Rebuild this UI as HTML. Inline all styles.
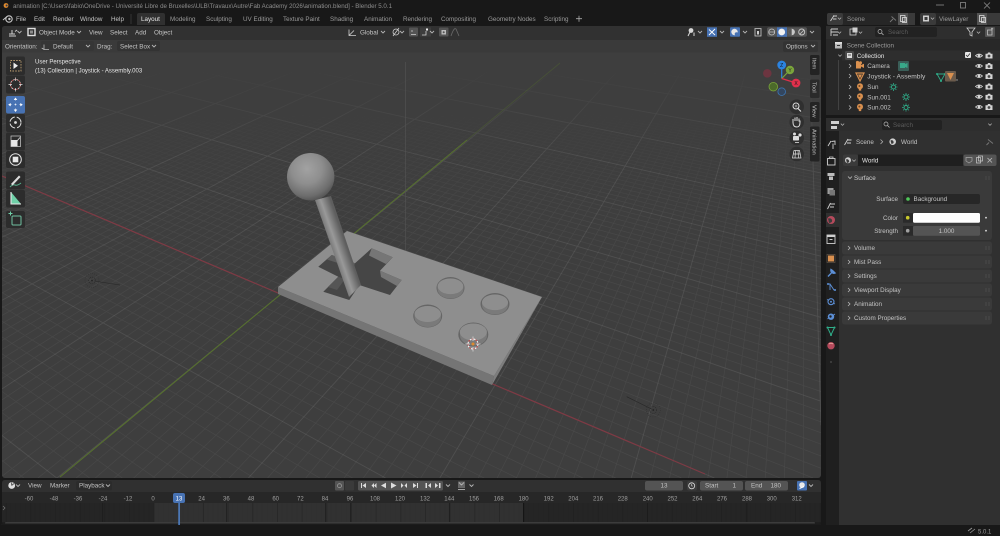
<!DOCTYPE html>
<html><head><meta charset="utf-8"><title>Blender</title>
<style>
html,body{margin:0;padding:0;background:#181818;width:1000px;height:536px;overflow:hidden}
#wrap{position:relative;width:1000px;height:536px;overflow:hidden}
svg{display:block;position:absolute;left:0;top:0;filter:blur(.25px)}
text{font-family:"Liberation Sans",sans-serif;font-size:6.3px;fill:#c4c4c4}
.d{fill:#9a9a9a}.b{fill:#e6e6e6}.r{text-anchor:end}.m{text-anchor:middle}
.ic{fill:none;stroke:#cfcfcf;stroke-width:.8}
.ch{fill:none;stroke:#b5b5b5;stroke-width:.8}
.tick{fill:#a0a0a0;text-anchor:middle;font-size:6px}
</style></head><body><div id="wrap">
<svg width="1000" height="536" viewBox="0 0 1000 536" xmlns="http://www.w3.org/2000/svg">
<defs>
<symbol id="cv" viewBox="0 0 6 6" overflow="visible"><path d="M1 2 L3 4 L5 2" fill="none" stroke="#b5b5b5" stroke-width=".9"/></symbol>
<symbol id="eye" viewBox="0 0 8 8" overflow="visible"><path d="M.5 4 Q4 .8 7.5 4 Q4 7.2 .5 4Z" fill="none" stroke="#d8d8d8" stroke-width=".8"/><circle cx="4" cy="4" r="1.3" fill="#d8d8d8"/></symbol>
<symbol id="cam" viewBox="0 0 8 8" overflow="visible"><path d="M.5 2.2H2.5L3 1H5.2L5.7 2.2H7.5V7H.5Z" fill="#d4d4d4"/><circle cx="4" cy="4.5" r="1.4" fill="#444"/></symbol>
<symbol id="bulb" viewBox="0 0 8 8" overflow="visible"><circle cx="4" cy="3.2" r="3" fill="#d9904f"/><rect x="2.8" y="5.8" width="2.4" height="1.8" fill="#d9904f"/><circle cx="3.4" cy="3" r="1" fill="#6b4526"/></symbol>
<symbol id="sunc" viewBox="0 0 8 8" overflow="visible"><circle cx="4" cy="4" r="2" fill="none" stroke="#2fae8a" stroke-width=".9"/><path d="M4 0V1.4M4 6.6V8M0 4H1.4M6.6 4H8M1.2 1.2L2.1 2.1M5.9 5.9L6.8 6.8M1.2 6.8L2.1 5.9M5.9 2.1L6.8 1.2" stroke="#2fae8a" stroke-width=".8"/></symbol>
<radialGradient id="ball" cx="42%" cy="33%" r="72%"><stop offset="0" stop-color="#a2a2a2"/><stop offset=".45" stop-color="#8e8e8e"/><stop offset=".8" stop-color="#6d6d6d"/><stop offset="1" stop-color="#4d4d4d"/></radialGradient>
<linearGradient id="stick" gradientUnits="userSpaceOnUse" x1="330.5" y1="248.6" x2="345.5" y2="243.4"><stop offset="0" stop-color="#727272"/><stop offset=".42" stop-color="#999"/><stop offset="1" stop-color="#5e5e5e"/></linearGradient>
<linearGradient id="mMinor" x1="0" y1="0" x2="0" y2="1"><stop offset=".0" stop-color="#000"/><stop offset=".19" stop-color="#000"/><stop offset=".40" stop-color="#fff"/><stop offset="1" stop-color="#fff"/></linearGradient>
<linearGradient id="mMajor" x1="0" y1="0" x2="0" y2="1"><stop offset=".0" stop-color="#000"/><stop offset=".12" stop-color="#000"/><stop offset=".30" stop-color="#fff"/><stop offset="1" stop-color="#fff"/></linearGradient>
<mask id="mkMinor" maskUnits="userSpaceOnUse" x="0" y="0" width="1000" height="536"><rect width="1000" height="536" fill="url(#mMinor)"/></mask>
<mask id="mkMajor" maskUnits="userSpaceOnUse" x="0" y="0" width="1000" height="536"><rect width="1000" height="536" fill="url(#mMajor)"/></mask>
<clipPath id="vp"><rect x="2" y="26" width="819" height="452" rx="3"/></clipPath>
<clipPath id="tl"><rect x="2" y="503" width="819" height="22"/></clipPath>
<pattern id="tkp" patternUnits="userSpaceOnUse" x="5.6" y="0" width="24.67" height="30"><rect width="24.67" height="30" fill="none"/><line x1=".5" y1="0" x2=".5" y2="30" stroke="#1a1a1a" stroke-opacity=".55" stroke-width=".7"/><line x1="5" y1="0" x2="5" y2="30" stroke="#000" stroke-opacity=".05" stroke-width=".6"/><line x1="10" y1="0" x2="10" y2="30" stroke="#000" stroke-opacity=".05" stroke-width=".6"/><line x1="15" y1="0" x2="15" y2="30" stroke="#000" stroke-opacity=".05" stroke-width=".6"/><line x1="20" y1="0" x2="20" y2="30" stroke="#000" stroke-opacity=".05" stroke-width=".6"/></pattern>
</defs>

<rect width="1000" height="536" fill="#181818"/>

<!-- Title bar -->
<circle cx="6" cy="5.5" r="2.4" fill="#e08a2c"/><circle cx="6.6" cy="5.5" r="1" fill="#26395a"/>
<text x="13" y="8" class="d" style="font-size:6.1px" fill-opacity=".9" textLength="379" lengthAdjust="spacingAndGlyphs">animation [C:\Users\fabio\OneDrive - Université Libre de Bruxelles\ULB\Travaux\Autre\Fab Academy 2026\animation.blend] - Blender 5.0.1</text>
<path d="M936 5H944" stroke="#8a8a8a" stroke-width=".8"/><rect x="960.5" y="2.5" width="5" height="5.5" fill="none" stroke="#8a8a8a" stroke-width=".8"/><path d="M984 2.5L990 8.5M990 2.5L984 8.5" stroke="#8a8a8a" stroke-width=".8"/>

<!-- Top bar -->
<circle cx="9" cy="19" r="3.2" fill="none" stroke="#c8c8c8" stroke-width="1.1"/><circle cx="9.4" cy="19" r="1.2" fill="#c8c8c8"/><path d="M3 20L7 16.5" stroke="#c8c8c8" stroke-width="1"/>
<text x="16" y="21">File</text><text x="34" y="21">Edit</text><text x="53" y="21">Render</text><text x="80" y="21">Window</text><text x="111" y="21">Help</text>
<line x1="131" y1="14" x2="131" y2="24" stroke="#333"/>
<path d="M137 25V15Q137 13 139 13H163Q165 13 165 15V25Z" fill="#303030"/>
<text x="141" y="21" class="b">Layout</text>
<g class="x"><text x="170" y="21" class="d">Modeling</text><text x="206" y="21" class="d">Sculpting</text><text x="243" y="21" class="d">UV Editing</text><text x="283" y="21" class="d">Texture Paint</text><text x="330" y="21" class="d">Shading</text><text x="364" y="21" class="d">Animation</text><text x="403" y="21" class="d">Rendering</text><text x="441" y="21" class="d">Compositing</text><text x="488" y="21" class="d">Geometry Nodes</text><text x="544" y="21" class="d">Scripting</text></g>
<path d="M576 18.7H582M579 15.7V21.7" stroke="#aaa" stroke-width=".8"/>

<!-- Viewport -->
<rect x="2" y="26" width="819" height="452" rx="3" fill="#3e3e3e"/>
<g clip-path="url(#vp)">
<g id="gMinor" mask="url(#mkMinor)" stroke="#fff" stroke-opacity=".055" stroke-width=".7" fill="none"></g>
<g id="gMajor" mask="url(#mkMajor)" stroke="#fff" stroke-opacity=".09" stroke-width=".9" fill="none"></g>
<!-- axes -->
<line x1="2" y1="176" x2="705" y2="474" stroke="#7e3a44" stroke-width="1.2"/>
<line x1="60" y1="477" x2="467" y2="140" stroke="#56702e" stroke-width="1.1"/>
<line x1="467" y1="140" x2="560" y2="63" stroke="#56702e" stroke-width="1" stroke-opacity=".35"/>
<line x1="405.5" y1="62" x2="405.5" y2="296" stroke="#555" stroke-width=".6"/>
<!-- sun lamps -->
<g fill="none" stroke="#262626" stroke-width=".6">
<circle cx="92" cy="280.5" r="3.4" stroke-dasharray="1 1"/><circle cx="92" cy="280.5" r="7" stroke-dasharray=".7 1.5" stroke-opacity=".75"/>
<circle cx="653.3" cy="410" r="3.4" stroke-dasharray="1 1"/><circle cx="653.3" cy="410" r="7" stroke-dasharray=".7 1.5" stroke-opacity=".75"/></g>
<circle cx="92" cy="280.5" r=".9" fill="#222"/><circle cx="653.3" cy="410" r=".9" fill="#222"/>
<line x1="94" y1="281" x2="120" y2="285" stroke="#262626" stroke-width=".6"/>
<line x1="651.5" y1="409" x2="626.7" y2="396.7" stroke="#262626" stroke-width=".6"/>

<!-- Model: base -->
<polygon points="278,287 494,376 492,385 278,294" fill="#757575"/>
<polygon points="494,376 542,297 492,385" fill="#7d7d7d"/>
<polygon points="347,231 542,297 494,376 278,287" fill="#8e8e8e"/>
<!-- cross cut -->
<polygon points="371.7,248.3 392.7,257.3 380,270.7 401.7,280 390,295 359.3,285 349.3,300 323.3,291.7 338.3,276.7 318.3,266.7 331.7,255 355,263.3" fill="#464646"/>
<polygon points="371.7,248.3 392.7,257.3 386,264 369,255.5" fill="#767676"/>
<polygon points="380,270.7 401.7,280 397,286 381,277" fill="#767676"/>
<polygon points="331.7,255 355,263.3 353,268 327,259.5" fill="#5f5f5f"/>
<polygon points="338.3,276.7 345,279 337,290 328,287" fill="#555"/>
<!-- stick -->
<polygon points="315,200 331,196 361,285 349,297" fill="url(#stick)"/>
<!-- sphere -->
<circle cx="310.7" cy="176.7" r="23.7" fill="url(#ball)"/>
<!-- buttons -->
<g stroke-width=".5">
<ellipse cx="450.5" cy="288" rx="14" ry="11" fill="#666"/><path d="M437.5 286.5 A12.8 8 0 0 1 463.5 286.5 V289 A13 9.5 0 0 1 437.5 289Z" fill="#7a7a7a"/><ellipse cx="450.5" cy="286.3" rx="12.8" ry="7.8" fill="#8e8e8e"/>
<ellipse cx="495" cy="304" rx="14.5" ry="11" fill="#666"/><path d="M482 302.5 A13 8 0 0 1 508 302.5 V305 A13 9.5 0 0 1 482 305Z" fill="#7a7a7a"/><ellipse cx="495" cy="302.3" rx="13" ry="7.8" fill="#8e8e8e"/>
<ellipse cx="427.7" cy="316" rx="14.5" ry="11.5" fill="#666"/><path d="M414.5 314 A13.2 8 0 0 1 441 314 V317 A13.2 10 0 0 1 414.5 317Z" fill="#7a7a7a"/><ellipse cx="427.7" cy="314" rx="13.2" ry="8" fill="#8e8e8e"/>
<ellipse cx="473.3" cy="334.5" rx="15" ry="12" fill="#666"/><path d="M460 332 A13.5 8.5 0 0 1 487 332 V335.5 A13.5 10 0 0 1 460 335.5Z" fill="#7a7a7a"/><ellipse cx="473.3" cy="332" rx="13.5" ry="8.5" fill="#8e8e8e"/>
</g>
<!-- 3D cursor -->
<circle cx="473" cy="344" r="5" fill="none" stroke="#fff" stroke-width="1" stroke-dasharray="2 2"/>
<circle cx="473" cy="344" r="5" fill="none" stroke="#c84848" stroke-width="1" stroke-dasharray="2 2" stroke-dashoffset="2"/>
<path d="M473 336.5V341M473 347V351.5M465.5 344H470M476 344H480.5" stroke="#ddd" stroke-width=".7"/>
<circle cx="473" cy="344" r="1.5" fill="#e08a2c"/>
</g>

<!-- Viewport header -->
<path d="M2 40V29Q2 26 5 26H818Q821 26 821 29V40Z" fill="#313131"/>
<rect x="2" y="40" width="819" height="12.5" fill="#3a3a3a"/>
<!-- editor icon -->
<path d="M9 34H15M12 30V33.5M15 31.5L17 30M9 36H16" stroke="#cfcfcf" stroke-width="1"/><use href="#cv" x="16.5" y="29" width="6" height="6"/>
<rect x="28" y="28.5" width="7" height="7" fill="none" stroke="#ddd" stroke-width="1.4"/><rect x="30" y="30.5" width="3" height="3" fill="#8c8c8c"/>
<text x="39" y="34.4">Object Mode</text><use href="#cv" x="76" y="29" width="6" height="6"/>
<text x="89" y="34.4">View</text><text x="110" y="34.4">Select</text><text x="135" y="34.4">Add</text><text x="154" y="34.4">Object</text>
<path d="M349 29.5V35.5H356M349 35.5L354 30.5" class="ic"/><text x="360" y="34.4">Global</text><use href="#cv" x="380" y="29" width="6" height="6"/>
<circle cx="396" cy="32" r="3" class="ic"/><path d="M393 36L399 28" class="ic"/><use href="#cv" x="399" y="29" width="6" height="6"/>
<rect x="409" y="27.5" width="9" height="9" rx="1" fill="#545454"/><path d="M411 34.5H416M411 31H413" class="ic"/>
<rect x="420" y="27.5" width="11" height="9" fill="#3d3d3d"/><path d="M422 35H426V31" class="ic"/><rect x="426" y="28.5" width="2" height="2" fill="#eee"/><use href="#cv" x="429" y="29" width="6" height="6"/>
<rect x="439" y="27.5" width="9.5" height="9" rx="1" fill="#545454"/><rect x="441.5" y="30" width="4.5" height="4.5" fill="#bbb"/><circle cx="443.7" cy="32.2" r="1" fill="#545454"/>
<path d="M451 36Q454 27 456 29L459 36" fill="none" stroke="#6a6a6a" stroke-width=".8"/>
<!-- right group -->
<circle cx="691" cy="30.5" r="2.4" fill="#d8d8d8"/><path d="M688 36L690 32M694 32.5V36" stroke="#d8d8d8" stroke-width="1"/><use href="#cv" x="697" y="29" width="6" height="6"/>
<rect x="707" y="27.3" width="10" height="9.5" fill="#4772b3"/><path d="M709 35L715 29M709 29.5L715 35M712 32L715 29" stroke="#fff" stroke-width=".9"/><use href="#cv" x="719" y="29" width="6" height="6"/>
<rect x="730" y="27.3" width="10" height="9.5" rx="1" fill="#4772b3"/><circle cx="734.5" cy="32" r="3.2" fill="#e6e6e6"/><circle cx="736.5" cy="34" r="1.8" fill="#4772b3"/><use href="#cv" x="742" y="29" width="6" height="6"/>
<path d="M754.5 28.5H761.5M755 29V36H761V29" class="ic"/><rect x="757" y="31" width="2" height="3.5" fill="#ccc"/>
<rect x="767" y="27.3" width="40" height="9.5" rx="2" fill="#545454"/><rect x="777" y="27.3" width="10" height="9.5" fill="#4772b3"/>
<circle cx="771.7" cy="32" r="3" fill="none" stroke="#c8c8c8" stroke-width=".8"/><path d="M768.7 32H774.7" stroke="#c8c8c8" stroke-width=".7"/>
<circle cx="781.7" cy="32" r="3.4" fill="#f2f2f2"/><circle cx="791.7" cy="32" r="3.2" fill="#c8c8c8"/><path d="M791.7 28.8A3.2 3.2 0 0 0 791.7 35.2Z" fill="#555"/>
<circle cx="801.7" cy="32" r="3" fill="none" stroke="#c8c8c8" stroke-width=".9"/><path d="M800 34L804 30" stroke="#c8c8c8" stroke-width=".8"/>
<use href="#cv" x="809" y="29" width="6" height="6"/>

<!-- tool settings -->
<text x="5" y="48.4">Orientation:</text>
<rect x="41" y="41" width="53" height="10" rx="2" fill="#363636"/>
<path d="M44 44.5V49.5M44 49.5H49M44 49.5L41.7 48" stroke="#bbb" stroke-width=".8" fill="none"/>
<text x="53" y="48.4">Default</text><use href="#cv" x="85" y="43" width="6" height="6"/>
<text x="97" y="48.4">Drag:</text>
<rect x="117" y="41" width="43" height="10" rx="2" fill="#333"/><text x="120" y="48.4">Select Box</text><use href="#cv" x="151" y="43" width="6" height="6"/>
<rect x="783" y="41.5" width="35" height="10.5" rx="2" fill="#333"/><text x="786" y="48.6">Options</text><use href="#cv" x="810" y="43" width="6" height="6"/>

<text x="35" y="63.6" class="b" style="font-size:6px">User Perspective</text>
<text x="35" y="72.6" class="b" style="font-size:6px">(13) Collection | Joystick - Assembly.003</text>

<!-- Left toolbar -->
<g>
<rect x="6" y="56.5" width="19" height="18.5" rx="2" fill="#2c2c2c"/>
<rect x="6" y="75.5" width="19" height="18" rx="2" fill="#2c2c2c"/>
<rect x="6" y="96" width="19" height="17.5" rx="2" fill="#4772b3"/>
<rect x="6" y="114" width="19" height="18" rx="2" fill="#2c2c2c"/>
<rect x="6" y="132.5" width="19" height="18" rx="2" fill="#2c2c2c"/>
<rect x="6" y="151" width="19" height="17" rx="2" fill="#2c2c2c"/>
<rect x="6" y="171.5" width="19" height="18" rx="2" fill="#2c2c2c"/>
<rect x="6" y="190" width="19" height="17.5" rx="2" fill="#2c2c2c"/>
<rect x="6" y="211" width="19" height="17" rx="2" fill="#2c2c2c"/>
<!-- select box -->
<rect x="10.5" y="60.5" width="10.5" height="10.5" fill="none" stroke="#b79a6e" stroke-width=".9" stroke-dasharray="1.6 1.2"/><path d="M13.5 62.5V69L18 65.7Z" fill="#eee"/>
<!-- cursor -->
<circle cx="15.5" cy="84.5" r="5" fill="none" stroke="#d8d8d8" stroke-width=".9" stroke-dasharray="2 1.5"/><circle cx="15.5" cy="84.5" r="5" fill="none" stroke="#b04b4b" stroke-width=".9" stroke-dasharray="2 1.5" stroke-dashoffset="2"/><path d="M15.5 77.5V81M15.5 88V91.5M8.5 84.5H12M19 84.5H22.5" stroke="#ddd" stroke-width=".7"/>
<!-- move -->
<path d="M15.5 98.5V111M9.5 104.7H21.5" stroke="#fff" stroke-width=".6" stroke-dasharray="2 3"/>
<path d="M15.5 97.5L13.7 100H17.3ZM15.5 112L13.7 109.5H17.3ZM8.2 104.7L10.7 103V106.4ZM22.8 104.7L20.3 103V106.4Z" fill="#fff"/>
<!-- rotate -->
<circle cx="15.5" cy="122.5" r="5.5" fill="none" stroke="#e0e0e0" stroke-width="1" stroke-dasharray="7 2"/><circle cx="15.5" cy="122.5" r="1.4" fill="#ddd"/>
<!-- scale -->
<rect x="11" y="140" width="6.5" height="6.5" fill="#e8e8e8"/><rect x="11" y="136" width="9.5" height="10.5" fill="none" stroke="#cfcfcf" stroke-width=".7"/><path d="M17 141L20 137.5" stroke="#ddd" stroke-width=".9"/>
<!-- transform -->
<circle cx="15.5" cy="159.5" r="5.8" fill="none" stroke="#e0e0e0" stroke-width="1"/><rect x="12.7" y="156.7" width="5.6" height="5.6" fill="#e8e8e8"/>
<!-- annotate -->
<path d="M10 187Q13 184 15 185T21 183" fill="none" stroke="#58b08e" stroke-width="1"/><path d="M11 184L19 175.5L20.5 177L12.5 185.5Z" fill="#ddd"/>
<!-- measure -->
<path d="M11 192V204H21Z" fill="#6fd0a8"/><path d="M11 192V204H21" fill="none" stroke="#e8e8e8" stroke-width="1.1"/>
<!-- add cube -->
<rect x="12" y="216" width="9" height="9" rx="1" fill="none" stroke="#6fbfa0" stroke-width="1"/><path d="M10.5 211.5V215.5M8.5 213.5H12.5" stroke="#6fd0a8" stroke-width="1"/>
</g>

<!-- Gizmo -->
<circle cx="767.3" cy="73.3" r="4.3" fill="#6c3540"/>
<circle cx="773.3" cy="86.7" r="4.3" fill="#4c6a2a" stroke="#7aa43b" stroke-width=".8"/>
<circle cx="781.7" cy="91.7" r="3.8" fill="#33465f" stroke="#3c78b8" stroke-width=".8"/>
<line x1="781.7" y1="78.5" x2="781.7" y2="66" stroke="#2b83e0" stroke-width="1.2"/>
<line x1="781.7" y1="78.5" x2="790" y2="70" stroke="#7aa43b" stroke-width="1.2"/>
<line x1="781.7" y1="78.5" x2="796" y2="83" stroke="#e0304c" stroke-width="1.2"/>
<circle cx="790" cy="70" r="4.2" fill="#7aa43b"/><text x="790" y="72" class="m" style="font-size:5px;fill:#222">Y</text>
<circle cx="781.7" cy="65" r="4.4" fill="#2b83e0"/><text x="781.7" y="67" class="m" style="font-size:5px;fill:#111">Z</text>
<circle cx="796" cy="83" r="4.4" fill="#e0304c"/><text x="796" y="85" class="m" style="font-size:5px;fill:#111">X</text>
<!-- Nav buttons -->
<circle cx="796.7" cy="106.7" r="7.3" fill="#2f2f2f"/><circle cx="796" cy="106" r="3" fill="none" stroke="#ddd" stroke-width="1"/><path d="M798 108.5L801 111.5" stroke="#ddd" stroke-width="1.2"/><path d="M794.6 106H797.4M796 104.6V107.4" stroke="#ddd" stroke-width=".6"/>
<circle cx="796.7" cy="122" r="7.3" fill="#2f2f2f"/><path d="M793 122.5V119M795 121V117.5M797 121V117M799 121.5V118.5M793 122.5C793 126 795 127 797 127S800 125.5 800 122V120.5" fill="none" stroke="#ddd" stroke-width="1"/>
<circle cx="796.7" cy="138" r="7.3" fill="#2f2f2f"/><rect x="793" y="136" width="6" height="4.5" rx=".8" fill="#ddd"/><circle cx="800" cy="135" r="1.6" fill="#ddd"/><circle cx="794.5" cy="134" r="1.5" fill="#ddd"/><path d="M795 142.5H799" stroke="#ddd" stroke-width=".8"/>
<circle cx="796.7" cy="154" r="7.3" fill="#2f2f2f"/><path d="M792.5 158L794 150.5H799.5L801 158ZM793 154H800.5M795.5 150.5L795 158M798 150.5L798.5 158" fill="none" stroke="#ddd" stroke-width=".7"/>

<!-- Sidebar tabs -->
<rect x="810" y="55" width="9.5" height="20" rx="1.5" fill="#232323"/>
<rect x="810" y="79.5" width="9.5" height="18.5" rx="1.5" fill="#2a2a2a"/>
<rect x="810" y="102" width="9.5" height="20" rx="1.5" fill="#232323"/>
<rect x="810" y="126.5" width="9.5" height="35" rx="1.5" fill="#232323"/>
<text transform="translate(812.5,58) rotate(90)" style="font-size:5.8px">Item</text>
<text transform="translate(812.5,82) rotate(90)" style="font-size:5.8px">Tool</text>
<text transform="translate(812.5,105) rotate(90)" style="font-size:5.8px">View</text>
<text transform="translate(812.5,129) rotate(90)" style="font-size:5.8px">Animation</text>

<!-- Timeline -->
<rect x="2" y="480" width="819" height="45" rx="3" fill="#1f1f1f"/>
<path d="M2 492V483Q2 480 5 480H818Q821 480 821 483V492Z" fill="#303030"/>
<rect x="2" y="492" width="819" height="11" fill="#272727"/>
<rect x="2" y="503" width="819" height="19" fill="#252525"/>
<rect x="154" y="503" width="369.5" height="19" fill="#313131"/>
<rect x="2" y="503" width="819" height="22" fill="url(#tkp)" clip-path="url(#tl)"/>
<line x1="102.7" y1="503" x2="102.7" y2="522" stroke="#1a1a1a" stroke-width=".7"/><line x1="226.7" y1="503" x2="226.7" y2="522" stroke="#1a1a1a" stroke-width=".7"/><line x1="325.7" y1="503" x2="325.7" y2="522" stroke="#1a1a1a" stroke-width=".7"/><line x1="350.7" y1="503" x2="350.7" y2="522" stroke="#1a1a1a" stroke-width=".7"/><line x1="449.3" y1="503" x2="449.3" y2="522" stroke="#1a1a1a" stroke-width=".7"/><line x1="523.5" y1="503" x2="523.5" y2="522" stroke="#111" stroke-width=".8"/><line x1="647.7" y1="503" x2="647.7" y2="522" stroke="#1a1a1a" stroke-width=".6"/><line x1="747" y1="503" x2="747" y2="522" stroke="#1a1a1a" stroke-width=".6"/>
<rect x="5" y="522" width="810" height="2" rx="1" fill="#3c3c3c"/>
<rect x="1" y="523.6" width="820" height="1.4" fill="#1c1c1c"/>
<path d="M3 506L5 508L3 510" fill="none" stroke="#777" stroke-width=".7"/>
<circle cx="11.7" cy="485.5" r="3.4" fill="#ddd"/><path d="M11.7 485.5L14 483.5M11.7 485.5V482.5" stroke="#333" stroke-width=".8"/><use href="#cv" x="15" y="482.5" width="6" height="6"/>
<text x="28" y="487.7">View</text><text x="50" y="487.7">Marker</text>
<rect x="76" y="481" width="36" height="9.5" rx="2" fill="#2b2b2b"/><text x="79" y="487.7">Playback</text><use href="#cv" x="105" y="482.5" width="6" height="6"/>
<rect x="335" y="481" width="9" height="9.5" rx="1" fill="#545454"/><circle cx="339.5" cy="485.7" r="2" fill="none" stroke="#999" stroke-width=".8"/>
<rect x="345" y="481" width="9" height="9.5" rx="1" fill="#3a3a3a"/>
<rect x="358" y="481" width="85" height="9.5" rx="1.5" fill="#545454"/>
<g fill="#ddd"><path d="M361 483V488H362V483ZM366 483L362.5 485.5L366 488Z"/><path d="M371.5 485.5L374 483V488ZM374 485.5L376.5 483V488Z"/><path d="M386 482.8V488.2L381 485.5Z"/><path d="M391 482.5V488.5L396.5 485.5Z"/><path d="M401 483V488L403.5 485.5ZM407 483V488L404.5 485.5Z"/><path d="M413 483V488L416.5 485.5ZM417 483H418V488H417Z"/><path d="M425 483V488L428 485.5ZM429 483H430.5V488H429Z" transform="matrix(-1 0 0 1 856 0)"/><path d="M435 483V488L438 485.5ZM439 483H440.5V488H439Z"/></g>
<use href="#cv" x="445" y="482.5" width="6" height="6"/>
<rect x="458" y="481.5" width="7" height="6.5" fill="#666"/><path d="M459 482.5L461.5 485L464 482.5M458 489.5H465" stroke="#ccc" stroke-width=".7" fill="none"/><use href="#cv" x="468.5" y="482.5" width="6" height="6"/>
<rect x="645" y="481" width="38" height="9.5" rx="2" fill="#545454"/><text x="664" y="487.7" class="m">13</text>
<rect x="687" y="481" width="10" height="9.5" rx="2" fill="#3c3c3c"/><circle cx="691.7" cy="485.8" r="3" fill="none" stroke="#ddd" stroke-width=".8"/><path d="M691.7 484V486H693" fill="none" stroke="#ddd" stroke-width=".6"/>
<rect x="700" y="481" width="43" height="9.5" rx="2" fill="#545454"/><text x="705" y="487.7">Start</text><text x="736" y="487.7" class="r">1</text>
<rect x="745" y="481" width="43" height="9.5" rx="2" fill="#545454"/><text x="751" y="487.7">End</text><text x="781" y="487.7" class="r">180</text>
<rect x="797" y="481" width="10" height="9.5" rx="1" fill="#4772b3"/><circle cx="802" cy="485" r="2.8" fill="#eaeaea"/><path d="M799.5 488.5L804 486.5" stroke="#fff"/><use href="#cv" x="808" y="482.5" width="6" height="6"/>

<!-- Timeline ruler -->
<g class="t">
<text class="tick" x="29" y="500.6">-60</text><text class="tick" x="54" y="500.6">-48</text><text class="tick" x="78" y="500.6">-36</text><text class="tick" x="103" y="500.6">-24</text><text class="tick" x="128" y="500.6">-12</text><text class="tick" x="153" y="500.6">0</text>
<text class="tick" x="201.6" y="500.6">24</text><text class="tick" x="226.4" y="500.6">36</text><text class="tick" x="251" y="500.6">48</text><text class="tick" x="275.7" y="500.6">60</text><text class="tick" x="300.4" y="500.6">72</text><text class="tick" x="325" y="500.6">84</text><text class="tick" x="350" y="500.6">96</text><text class="tick" x="375" y="500.6">108</text><text class="tick" x="400" y="500.6">120</text><text class="tick" x="425" y="500.6">132</text><text class="tick" x="449.3" y="500.6">144</text><text class="tick" x="474" y="500.6">156</text><text class="tick" x="498.7" y="500.6">168</text><text class="tick" x="523.6" y="500.6">180</text><text class="tick" x="548.7" y="500.6">192</text><text class="tick" x="573.3" y="500.6">204</text><text class="tick" x="598" y="500.6">216</text><text class="tick" x="622.7" y="500.6">228</text><text class="tick" x="647.7" y="500.6">240</text><text class="tick" x="672.5" y="500.6">252</text><text class="tick" x="697.3" y="500.6">264</text><text class="tick" x="722" y="500.6">276</text><text class="tick" x="747" y="500.6">288</text><text class="tick" x="771.7" y="500.6">300</text><text class="tick" x="796.7" y="500.6">312</text>
</g>
<rect x="178.3" y="500" width="1.6" height="25" fill="#4f7fc2"/>
<rect x="173" y="493" width="12" height="10" rx="2" fill="#4772b3"/><text x="179" y="500.4" class="m b" style="font-size:6px;fill:#fff">13</text>

<!-- Right column: scene row -->
<rect x="827" y="13" width="88" height="12" rx="2" fill="#262626"/>
<rect x="827" y="13" width="16" height="12" rx="2" fill="#3a3a3a"/>
<path d="M830.5 21L834 15.5M833 16H837M833 19H836.5" stroke="#cfcfcf" stroke-width=".9" fill="none"/><use href="#cv" x="837" y="16" width="5" height="5"/>
<text x="847" y="21" class="d">Scene</text>
<path d="M890 22L893 19M891.5 16.5L896 20.5" stroke="#777" stroke-width=".9"/>
<rect x="898" y="13" width="10" height="12" fill="#545454"/><rect x="900.5" y="15.5" width="4.5" height="6" fill="none" stroke="#ddd" stroke-width=".8"/><rect x="902.5" y="17.5" width="4" height="5" fill="none" stroke="#ddd" stroke-width=".8"/>
<rect x="908" y="13" width="7" height="12" fill="#3a3a3a"/>
<rect x="920" y="13" width="80" height="12" rx="2" fill="#262626"/>
<rect x="920" y="13" width="16" height="12" rx="2" fill="#3a3a3a"/>
<rect x="923" y="15.5" width="6" height="6" fill="#cfcfcf"/><rect x="924.5" y="17" width="3" height="3" fill="#3a3a3a"/><use href="#cv" x="930" y="16" width="5" height="5"/>
<text x="939" y="21" class="d">ViewLayer</text>
<rect x="977" y="13" width="10" height="12" fill="#545454"/><rect x="979.5" y="15.5" width="4.5" height="6" fill="none" stroke="#ddd" stroke-width=".8"/><rect x="981.5" y="17.5" width="4" height="5" fill="none" stroke="#ddd" stroke-width=".8"/>
<rect x="987" y="13" width="13" height="12" fill="#3a3a3a"/>

<!-- Outliner -->
<rect x="826" y="26" width="174" height="13" fill="#2e2e2e"/>
<rect x="826" y="39" width="174" height="76" fill="#282828"/>
<path d="M831 29H838M831 32H838M833 35H838M831 29V36" stroke="#cfcfcf" stroke-width=".9" fill="none"/><use href="#cv" x="837" y="30" width="5" height="5"/>
<rect x="850" y="29" width="6" height="6" fill="none" stroke="#cfcfcf" stroke-width=".8"/><rect x="852.5" y="27.5" width="5" height="5" fill="#cfcfcf"/><use href="#cv" x="858" y="30" width="5" height="5"/>
<rect x="875" y="27" width="62" height="10" rx="2" fill="#222"/><circle cx="880" cy="31.5" r="2" fill="none" stroke="#bbb" stroke-width=".7"/><path d="M881.5 33L883.5 35" stroke="#bbb" stroke-width=".8"/><text x="888" y="34.2" style="fill:#5c5c5c">Search</text>
<path d="M967 28H975L972 32V36L970 35V32Z" fill="none" stroke="#cfcfcf" stroke-width=".8"/><use href="#cv" x="976" y="30" width="5" height="5"/>
<rect x="985" y="27" width="10" height="10" rx="1" fill="#545454"/><rect x="987.5" y="30" width="4.5" height="5" fill="none" stroke="#ccc" stroke-width=".7"/><path d="M992 27.7V30M991 28.8H993.2" stroke="#ccc" stroke-width=".7"/>

<rect x="835" y="42" width="7" height="6.5" fill="#b8b8b8"/><rect x="835" y="42" width="7" height="1.8" fill="#e0e0e0"/><rect x="837" y="45" width="3" height="1" fill="#333"/>
<text x="846.7" y="47.4" class="d">Scene Collection</text>
<rect x="842" y="50.5" width="158" height="10" fill="#2e2e2e"/>
<use href="#cv" x="837.5" y="53" width="5" height="5"/>
<rect x="845" y="51" width="9" height="9" rx="1.5" fill="#4a4a4a"/><rect x="847" y="53" width="5" height="5" fill="#ddd"/><rect x="848" y="54.5" width="3" height="1" fill="#555"/>
<text x="856.7" y="57.8" class="b">Collection</text>
<rect x="965" y="52" width="6" height="6" rx="1" fill="#e8e8e8"/><path d="M966 55L967.5 56.5L970 53.5" fill="none" stroke="#333" stroke-width=".8"/>
<line x1="838.5" y1="60" x2="838.5" y2="110" stroke="#555" stroke-width=".6"/>
<g class="ch"><path d="M849 64L851 66L849 68"/><path d="M849 74L851 76L849 78"/><path d="M849 85L851 87L849 89"/><path d="M849 95L851 97L849 99"/><path d="M849 105.5L851 107.5L849 109.5"/></g>
<rect x="856" y="63" width="5" height="5.5" fill="#d9904f"/><circle cx="857.5" cy="62.5" r="1.6" fill="#d9904f"/><circle cx="860.5" cy="62.7" r="1.5" fill="#d9904f"/><path d="M861 65L864 63.7V68L861 66.5Z" fill="#d9904f"/>
<text x="867.3" y="68">Camera</text>
<rect x="898" y="61" width="11" height="10" rx="1" fill="#3a5e58"/><rect x="900" y="63" width="5" height="5" fill="#38a889"/><path d="M905 64L907.5 63V68L905 67Z" fill="#38a889"/>
<path d="M856 73H864L860 81Z" fill="none" stroke="#d9904f" stroke-width="1.2"/><path d="M858 74.5H862L860 78.5Z" fill="#d9904f"/>
<text x="867.3" y="78.3" textLength="58" lengthAdjust="spacingAndGlyphs">Joystick - Assembly</text>
<path d="M937 74H945L941 81Z" fill="none" stroke="#2fae8a" stroke-width=".9"/><circle cx="937" cy="74" r="1" fill="#2fae8a"/><circle cx="945" cy="74" r="1" fill="#2fae8a"/><circle cx="941" cy="81" r="1" fill="#2fae8a"/>
<rect x="945" y="71" width="11" height="10.5" rx="1" fill="#6b5b4c"/><path d="M947 73H954L950.5 80Z" fill="#d9904f"/><circle cx="957" cy="80" r=".7" fill="#aaa"/>
<use href="#bulb" x="856" y="83" width="8" height="8"/><text x="867.3" y="89">Sun</text><use href="#sunc" x="889.5" y="83" width="8" height="8"/>
<use href="#bulb" x="856" y="93" width="8" height="8"/><text x="867.3" y="99.4">Sun.001</text><use href="#sunc" x="902" y="93" width="8" height="8"/>
<use href="#bulb" x="856" y="103.5" width="8" height="8"/><text x="867.3" y="109.7">Sun.002</text><use href="#sunc" x="902" y="103.5" width="8" height="8"/>
<use href="#eye" x="975" y="51.7" width="8" height="8"/><use href="#cam" x="985" y="51.5" width="8" height="8"/>
<use href="#eye" x="975" y="62" width="8" height="8"/><use href="#cam" x="985" y="62" width="8" height="8"/>
<use href="#eye" x="975" y="72" width="8" height="8"/><use href="#cam" x="985" y="72" width="8" height="8"/>
<use href="#eye" x="975" y="82.5" width="8" height="8"/><use href="#cam" x="985" y="82.5" width="8" height="8"/>
<use href="#eye" x="975" y="92.7" width="8" height="8"/><use href="#cam" x="985" y="92.7" width="8" height="8"/>
<use href="#eye" x="975" y="103" width="8" height="8"/><use href="#cam" x="985" y="103" width="8" height="8"/>

<!-- Properties -->
<rect x="826" y="118" width="174" height="13" fill="#2e2e2e"/>
<rect x="826" y="131" width="174" height="394" fill="#303030"/>
<rect x="826" y="131" width="13" height="394" fill="#1f1f1f"/>
<path d="M831 121H839V124H831ZM831 126H837V129H831Z" fill="#cfcfcf"/><use href="#cv" x="840" y="122" width="5" height="5"/>
<rect x="882" y="120" width="60" height="10" rx="2" fill="#222"/><circle cx="886" cy="124" r="2" fill="none" stroke="#bbb" stroke-width=".7"/><path d="M887.5 125.5L889.5 127.5" stroke="#bbb" stroke-width=".8"/><text x="893" y="127" style="fill:#5c5c5c">Search</text>
<use href="#cv" x="987.5" y="122" width="5" height="5"/>
<!-- Tab icons -->
<rect x="826" y="213" width="13" height="14" fill="#303030"/>
<path d="M828 146L831 141M833 143.5V149M831.5 141.5L835 141V145" stroke="#cfcfcf" stroke-width=".9" fill="none"/>
<rect x="827.5" y="158.5" width="7.5" height="6.5" fill="none" stroke="#cfcfcf" stroke-width=".9"/><path d="M829.5 158.5V157H833V158.5" stroke="#cfcfcf" stroke-width=".8" fill="none"/>
<path d="M827.5 173H834.5V176H827.5ZM829 176.5H833V180H829Z" fill="#bcbcbc"/>
<rect x="827.5" y="188" width="6" height="6" fill="#9c9c9c"/><rect x="829.5" y="190" width="5.5" height="5.5" fill="#777"/>
<path d="M827.5 209L830.5 203M830 204H835M830 207H834" stroke="#cfcfcf" stroke-width=".9" fill="none"/>
<circle cx="831" cy="220" r="4" fill="#b54a5c"/><path d="M828 218.5Q831 217.5 832 220T829 223" fill="#3c3c3c"/>
<rect x="827" y="235" width="8" height="8.5" fill="none" stroke="#cfcfcf" stroke-width=".9"/><rect x="827" y="235" width="8" height="2" fill="#cfcfcf"/><rect x="829.5" y="239" width="3" height="1" fill="#cfcfcf"/>
<rect x="828" y="255.5" width="6" height="6" fill="#d9904f"/><rect x="827" y="254.5" width="8" height="8" fill="none" stroke="#6b5b4c" stroke-width=".6"/>
<path d="M828 276.5L832 272.3M831 269.5A3 3 0 0 0 835 273L833.5 271.5L832.5 270.5Z" stroke="#5c8fd6" stroke-width="1.4" fill="#5c8fd6"/>
<path d="M828 284H830L834 290H836M830 284V290" stroke="#5c8fd6" stroke-width=".9" fill="none"/><circle cx="828" cy="284" r="1" fill="#5c8fd6"/><circle cx="835" cy="290" r="1" fill="#5c8fd6"/>
<circle cx="831" cy="301.7" r="3" fill="none" stroke="#5c8fd6" stroke-width="1.1"/><circle cx="831" cy="301.7" r="1" fill="#5c8fd6"/><path d="M827 299.5L829 300.5M835 304L833 303" stroke="#5c8fd6" stroke-width=".8"/>
<circle cx="831" cy="316.7" r="3.2" fill="#5c8fd6"/><circle cx="830.5" cy="316.5" r="1.2" fill="#1f1f1f"/><path d="M827.5 319L829 317.5M835 314L833 315.5" stroke="#5c8fd6" stroke-width=".8"/>
<path d="M827.5 327.5H834.5L831 335Z" fill="none" stroke="#2fae8a" stroke-width="1"/><circle cx="827.5" cy="327.5" r="1" fill="#2fae8a"/><circle cx="834.5" cy="327.5" r="1" fill="#2fae8a"/><circle cx="831" cy="335" r="1" fill="#2fae8a"/>
<circle cx="831" cy="345.7" r="3.7" fill="#b54a5c"/><path d="M829 344Q831 342.5 833 344" stroke="#eba" fill="none" stroke-width=".8"/>
<path d="M830 362L832 362" stroke="#555"/>

<!-- Breadcrumb -->
<path d="M844.5 145L848 139M847 140H851.5M847 143H851" stroke="#cfcfcf" stroke-width=".9" fill="none"/>
<text x="856" y="144">Scene</text><path d="M880.5 139.5L882.7 141.7L880.5 144" fill="none" stroke="#aaa" stroke-width=".8"/>
<circle cx="892.7" cy="141.7" r="3.3" fill="#cfcfcf"/><path d="M890.5 140.5Q892.7 139.5 893.5 141.5T891.5 144" fill="#3a3a3a"/>
<text x="901" y="144">World</text>
<path d="M986.5 145L989 142.5M988 139.5L993 143.5" stroke="#777" stroke-width=".9"/>
<!-- World selector -->
<rect x="843" y="154.5" width="15" height="11.5" rx="2" fill="#3a3a3a"/>
<circle cx="848" cy="160.3" r="3" fill="#cfcfcf"/><path d="M846 159.5Q848 158.5 849 160.5T847 163" fill="#3a3a3a"/><use href="#cv" x="851.5" y="158" width="5" height="5"/>
<rect x="858" y="154.5" width="105" height="11.5" fill="#1f1f1f"/><text x="862" y="162.7" class="b">World</text>
<rect x="963.5" y="154.5" width="33" height="11.5" rx="2" fill="#545454"/>
<path d="M966 157.5H972V161L969 163L966 161Z" fill="none" stroke="#a8a8a8" stroke-width=".7"/>
<rect x="976.5" y="157.5" width="4" height="5.5" fill="none" stroke="#ccc" stroke-width=".7"/><rect x="978.5" y="156" width="4" height="5" fill="none" stroke="#ccc" stroke-width=".7"/>
<path d="M987.5 158L992 162.5M992 158L987.5 162.5" stroke="#bbb" stroke-width=".8"/>

<!-- Surface panel -->
<rect x="842" y="171" width="150" height="69" rx="3" fill="#3a3a3a"/>
<path d="M848 176.5L850 178.5L852 176.5" fill="none" stroke="#bbb" stroke-width=".8"/>
<text x="854" y="180" class="b" style="fill:#cfcfcf">Surface</text>
<text x="898" y="201" class="r">Surface</text>
<rect x="903" y="194" width="77" height="10" rx="2" fill="#272727"/>
<circle cx="908" cy="199" r="1.8" fill="#50c95a"/><text x="913.5" y="201.2">Background</text>
<text x="898" y="220" class="r">Color</text>
<rect x="903" y="213" width="10" height="9.7" fill="#2a2a2a"/>
<circle cx="907.7" cy="217.7" r="1.8" fill="#c9c92c"/>
<rect x="913" y="213" width="67" height="9.7" rx="1.5" fill="#fff"/>
<circle cx="986" cy="217.7" r=".9" fill="#ddd"/>
<text x="898" y="233" class="r">Strength</text>
<rect x="903" y="226" width="10" height="9.7" fill="#2a2a2a"/>
<circle cx="907.7" cy="230.7" r="1.8" fill="#a1a1a1"/>
<rect x="913" y="226" width="67" height="9.7" rx="1.5" fill="#545454"/>
<text x="946.5" y="233" class="m">1.000</text>
<circle cx="986" cy="230.7" r=".9" fill="#ddd"/>
<g fill="#545454"><circle cx="986" cy="177" r=".6"/><circle cx="989" cy="177" r=".6"/><circle cx="986" cy="179" r=".6"/><circle cx="989" cy="179" r=".6"/></g>

<g fill="#3a3a3a">
<rect x="842" y="241.5" width="150" height="13" rx="2.5"/>
<rect x="842" y="255.5" width="150" height="13" rx="2.5"/>
<rect x="842" y="269.5" width="150" height="13" rx="2.5"/>
<rect x="842" y="283.5" width="150" height="13" rx="2.5"/>
<rect x="842" y="297.5" width="150" height="13" rx="2.5"/>
<rect x="842" y="311.5" width="150" height="13" rx="2.5"/>
</g>
<g class="ch"><path d="M848 246L850 248L848 250"/><path d="M848 260L850 262L848 264"/><path d="M848 274L850 276L848 278"/><path d="M848 288L850 290L848 292"/><path d="M848 302L850 304L848 306"/><path d="M848 316L850 318L848 320"/></g>
<text x="854" y="250">Volume</text><text x="854" y="264">Mist Pass</text><text x="854" y="278">Settings</text><text x="854" y="292">Viewport Display</text><text x="854" y="306">Animation</text><text x="854" y="320">Custom Properties</text>
<g fill="#5a5a5a"><circle cx="986" cy="247" r=".6"/><circle cx="989" cy="247" r=".6"/><circle cx="986" cy="249" r=".6"/><circle cx="989" cy="249" r=".6"/><circle cx="986" cy="261" r=".6"/><circle cx="989" cy="261" r=".6"/><circle cx="986" cy="263" r=".6"/><circle cx="989" cy="263" r=".6"/><circle cx="986" cy="275" r=".6"/><circle cx="989" cy="275" r=".6"/><circle cx="986" cy="277" r=".6"/><circle cx="989" cy="277" r=".6"/><circle cx="986" cy="289" r=".6"/><circle cx="989" cy="289" r=".6"/><circle cx="986" cy="291" r=".6"/><circle cx="989" cy="291" r=".6"/><circle cx="986" cy="303" r=".6"/><circle cx="989" cy="303" r=".6"/><circle cx="986" cy="305" r=".6"/><circle cx="989" cy="305" r=".6"/><circle cx="986" cy="317" r=".6"/><circle cx="989" cy="317" r=".6"/><circle cx="986" cy="319" r=".6"/><circle cx="989" cy="319" r=".6"/></g>

<!-- Status bar -->
<path d="M968 531L972 528M970 533L975 529" stroke="#999" stroke-width=".8"/>
<text x="978" y="533.5" class="d" style="font-size:6px">5.0.1</text>
</svg>
</div>
<script>
(function(){
var O=[281,294.2],VX=[-731,-135],VY=[804,-135],p=-0.0873,q=0.15;
var L=2,R=821,T=26,Bm=478;
function Pt(u,v){var a=u*p,b=v*q,w=1+a+b;return[(O[0]+a*VX[0]+b*VY[0])/w,(O[1]+a*VX[1]+b*VY[1])/w];}
function clip(A,B){
  var t0=0,t1=1,dx=B[0]-A[0],dy=B[1]-A[1];
  var ps=[-dx,dx,-dy,dy],qs=[A[0]-L,R-A[0],A[1]-T,Bm-A[1]];
  for(var i=0;i<4;i++){
    if(ps[i]===0){if(qs[i]<0)return null;continue;}
    var r=qs[i]/ps[i];
    if(ps[i]<0){if(r>t1)return null;if(r>t0)t0=r;}
    else{if(r<t0)return null;if(r<t1)t1=r;}
  }
  return[[A[0]+t0*dx,A[1]+t0*dy],[A[0]+t1*dx,A[1]+t1*dy]];
}
function seg(fix,isU,lo,hi){
  if(isU){var m=(0.05-1-fix*p)/q;if(lo<m)lo=m;}else{var n=(0.05-1-fix*q)/p;if(hi>n)hi=n;}
  if(lo>=hi)return'';
  var A=isU?Pt(fix,lo):Pt(lo,fix),B=isU?Pt(fix,hi):Pt(hi,fix);
  var c=clip(A,B);if(!c)return'';
  return'M'+c[0][0].toFixed(1)+' '+c[0][1].toFixed(1)+'L'+c[1][0].toFixed(1)+' '+c[1][1].toFixed(1);
}
var maj='',min='',i,t;
for(i=-60;i<=60;i++){maj+=seg(i,true,-60,60);maj+=seg(i,false,-60,60);}
for(i=-200;i<=200;i++){if(i%10==0)continue;t=i/10;min+=seg(t,true,-12,20);}
for(i=-120;i<=200;i++){if(i%10==0)continue;t=i/10;min+=seg(t,false,-20,20);}
var NS='http://www.w3.org/2000/svg';
var a=document.createElementNS(NS,'path');a.setAttribute('d',min);document.getElementById('gMinor').appendChild(a);
var b=document.createElementNS(NS,'path');b.setAttribute('d',maj);document.getElementById('gMajor').appendChild(b);
})();
</script>
</body></html>
